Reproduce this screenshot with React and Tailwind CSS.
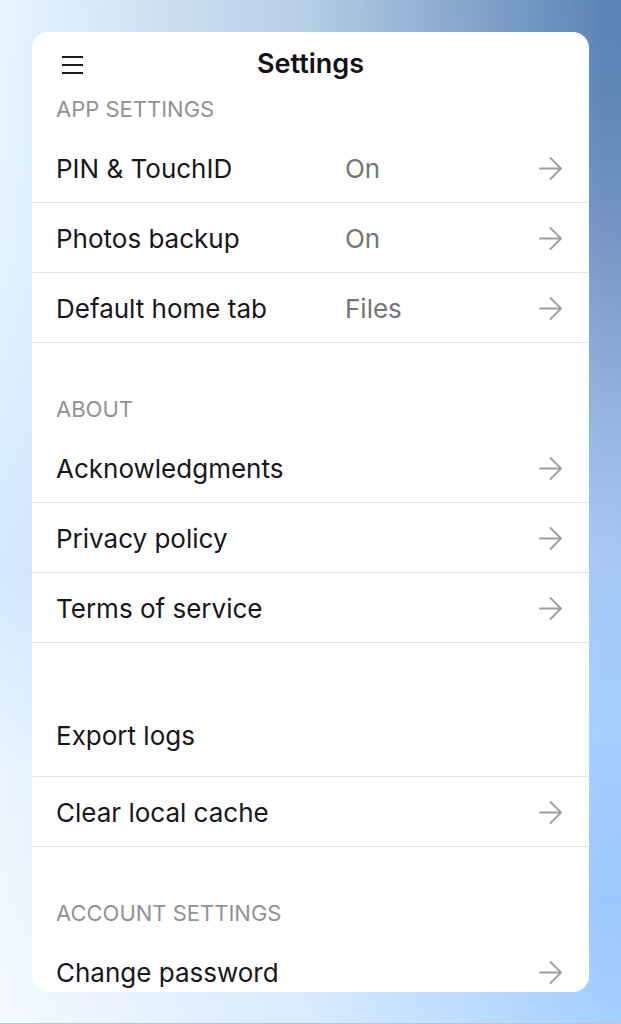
import React from "react";

const sections = [
  {
    title: "App settings",
    rows: [
      { label: "PIN & TouchID", value: "On" },
      { label: "Photos backup", value: "On" },
      { label: "Default home tab", value: "Files" },
    ],
  },
  {
    title: "About",
    rows: [
      { label: "Acknowledgments" },
      { label: "Privacy policy" },
      { label: "Terms of service" },
    ],
  },
  {
    rows: [
      { label: "Export logs", tall: true, noArrow: true },
      { label: "Clear local cache" },
    ],
  },
  {
    title: "Account settings",
    rows: [{ label: "Change password" }],
  },
];

const MenuIcon = () => (
  <svg width="24" height="24" viewBox="0 0 24 24" fill="none" stroke="#1c1a20" strokeWidth="2" aria-hidden="true">
    <path d="M2 4h21M2 12h21M2 20h21" />
  </svg>
);

const ArrowIcon = () => (
  <svg
    className="shrink-0"
    width="24"
    height="24"
    viewBox="0 0 24 24"
    fill="none"
    stroke="#a09ea0"
    strokeWidth="1.9"
    strokeLinecap="round"
    strokeLinejoin="round"
    aria-hidden="true"
  >
    <path d="M1 11.5h21M11.5 1L22 11.5 11.5 22" />
  </svg>
);

const Row = ({ label, value, tall, noArrow }) => (
  <li className="border-b border-[#e6e6e8]">
    <button
      type="button"
      className={`flex w-full items-center pt-0.5 pl-6 pr-[26px] text-left text-[26px] leading-8 ${
        tall ? "h-[83px]" : "h-[69px]"
      }`}
    >
      <span className={value ? "w-[57%] text-[#17171c]" : "flex-1 text-[#17171c]"}>{label}</span>
      {value && <span className="flex-1 text-[#757575]">{value}</span>}
      {!noArrow && <ArrowIcon />}
    </button>
  </li>
);

const App = () => {
  return (
    <div className="relative isolate h-screen border-b border-[#b4c6d8] bg-[linear-gradient(to_bottom,#e8f6ff_0%,#e4f3ff_25%,#d2e8ff_56%,#eaf5ff_75%,#f5faff_100%)] px-8 pt-8 pb-[31px] font-['Inter',sans-serif]">
      {/* darker blue side of the backdrop, fades out to the left */}
      <div className="absolute inset-0 -z-10 bg-[linear-gradient(to_bottom,#5b84b6_0%,#5f87b8_9%,#7395c3_22%,#8fb0da_38%,#a6c8f4_54%,#a4cfff_72%,#9bc8ff_88%,#a6d0ff_100%)] [mask-image:linear-gradient(to_right,transparent_0%,rgba(0,0,0,0.36)_50%,black_97%)]" />

      <main className="h-full overflow-hidden rounded-2xl bg-white">
        {/* HEADER */}
        <header className="grid h-[61px] grid-cols-[1fr_auto_1fr] items-center px-7">
          <button type="button" aria-label="Menu" className="justify-self-start pt-1">
            <MenuIcon />
          </button>
          <h1 className="pt-0.5 text-[27px] leading-8 font-semibold text-[#111116]">Settings</h1>
        </header>

        {/* SECTIONS */}
        <div className="flex flex-col gap-[50px]">
          {sections.map((section, i) => (
            <section key={i}>
              {section.title && (
                <h2 className="mb-2 px-6 text-[22px] leading-8 text-[#929292] uppercase">
                  {section.title}
                </h2>
              )}
              <ul>
                {section.rows.map((row) => (
                  <Row key={row.label} {...row} />
                ))}
              </ul>
            </section>
          ))}
        </div>
      </main>
    </div>
  );
};

export default App;
